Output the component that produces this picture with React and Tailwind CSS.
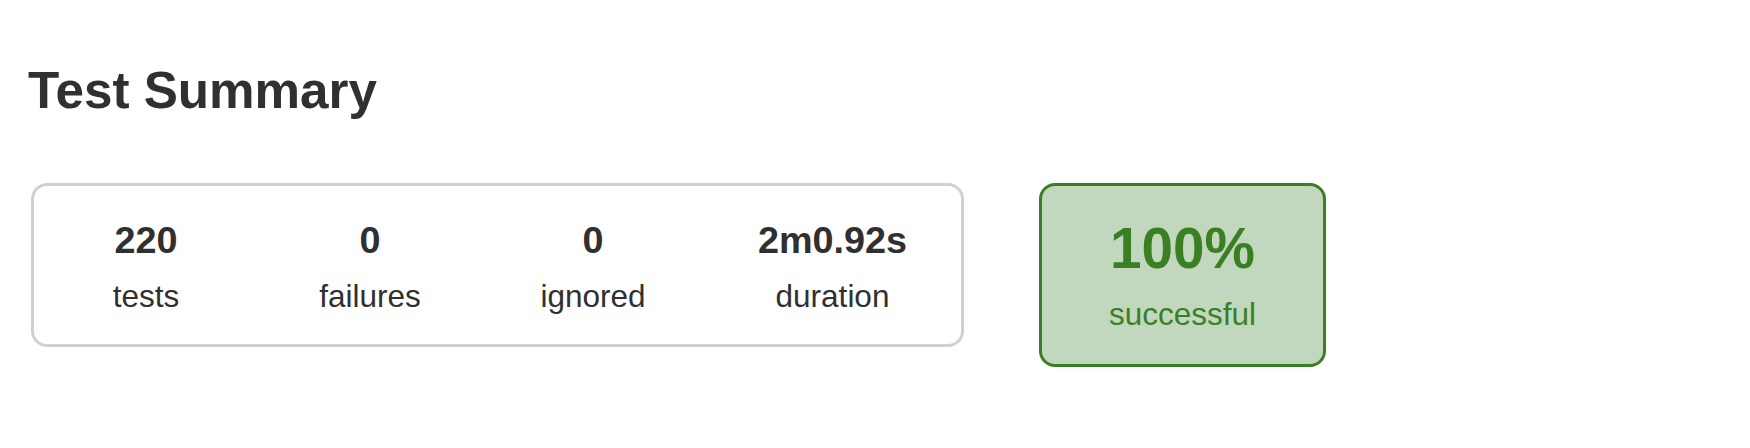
export default function App() {
  const stats = [
    { value: "220", label: "tests", width: "w-[224px]" },
    { value: "0", label: "failures", width: "w-[224px]" },
    { value: "0", label: "ignored", width: "w-[222px]" },
    { value: "2m0.92s", label: "duration", width: "w-[257px]" },
  ];

  return (
    <div className="min-h-screen bg-white font-['Liberation_Sans',Arial,sans-serif] text-[#303030]">
      <div className="pl-[28px] pt-[62px]">
        <h1 className="text-[51.2px] font-bold leading-[58px]">Test Summary</h1>

        <div className="mt-[63px] flex items-start">
          {/* counters */}
          <div className="ml-[3px] flex rounded-[16px] border-[3px] border-[#d0d0d0]">
            {stats.map((s) => (
              <div
                key={s.label}
                className={`${s.width} pt-[32px] pb-[30px] text-center`}
              >
                <p className="mb-[16px] text-[37.8px] font-bold leading-[44px]">
                  {s.value}
                </p>
                <p className="text-[31.5px] leading-[36px]">{s.label}</p>
              </div>
            ))}
          </div>

          {/* success rate */}
          <div className="ml-[75px] w-[287px] rounded-[16px] border-[3px] border-[#3b7f23] bg-[#c1d8bf] pt-[30px] pb-[32px] text-center text-[#3b7f23]">
            <p className="mb-[15px] text-[56.7px] font-bold leading-[65px]">100%</p>
            <p className="text-[31.5px] leading-[36px]">successful</p>
          </div>
        </div>
      </div>
    </div>
  );
}
